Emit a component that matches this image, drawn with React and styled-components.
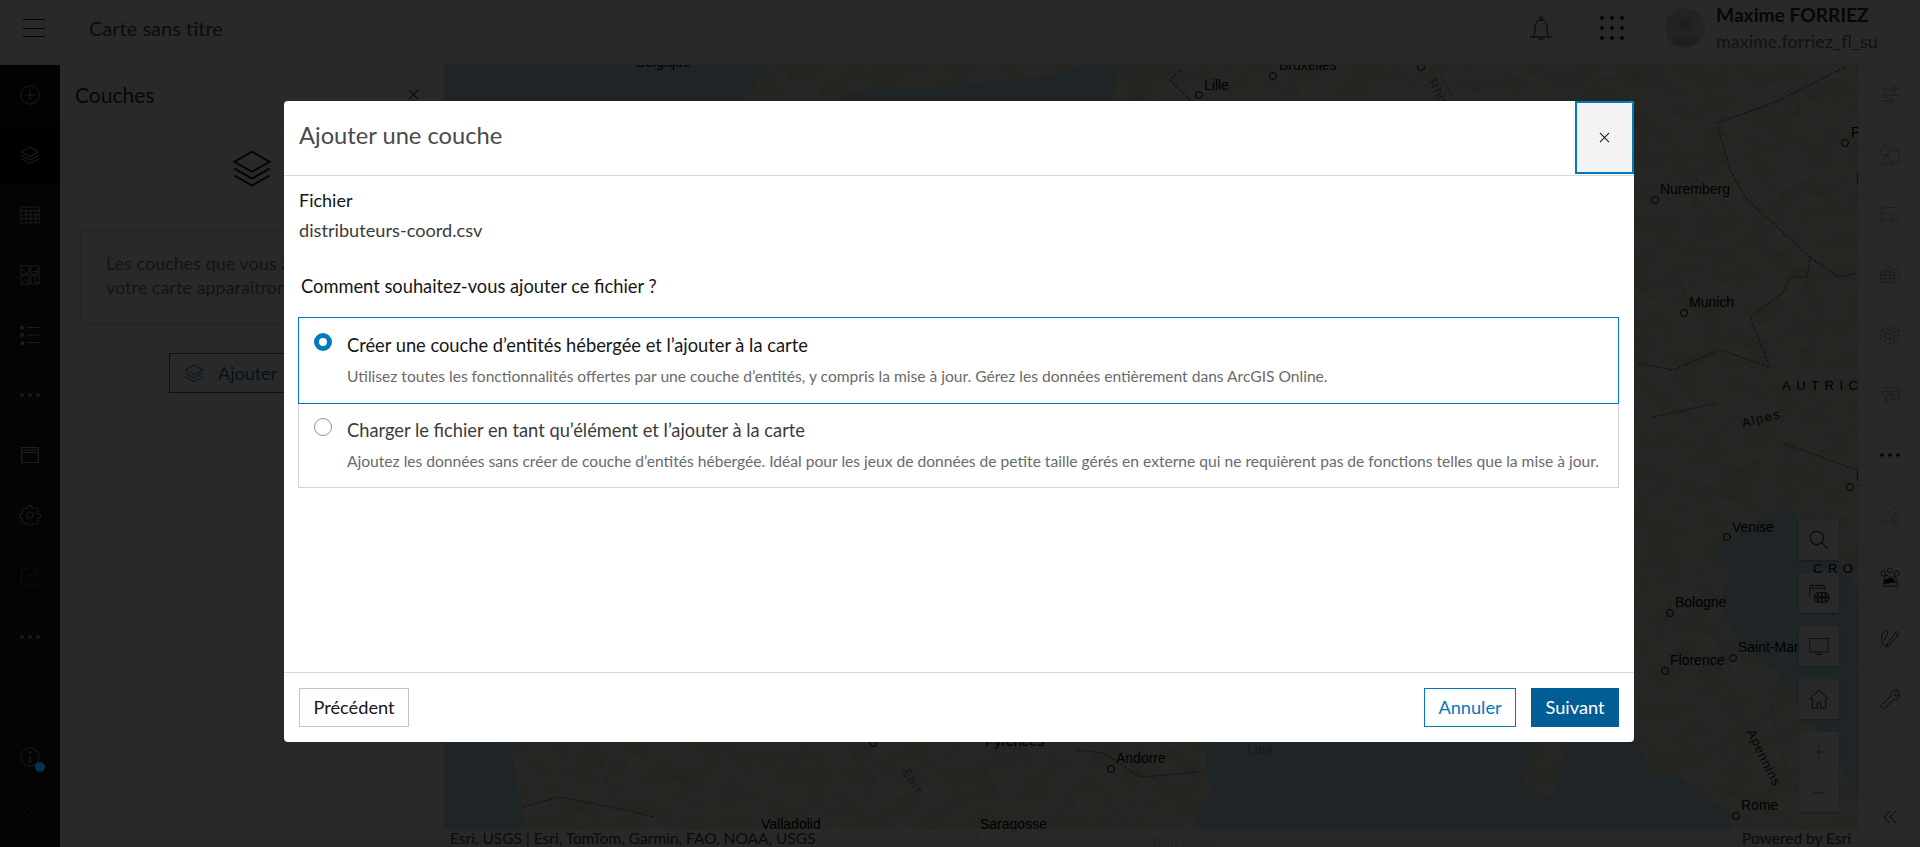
import React from "react";
import styled, { createGlobalStyle } from "styled-components";

const Global = createGlobalStyle`
  html, body { margin: 0; padding: 0; height: 100%; overflow: hidden; background: #fff; }
  * { box-sizing: border-box; }
  body { font-family: Lato, "Open Sans", "Liberation Sans", sans-serif; color: #151515; }
`;

const Page = styled.div`
  position: relative;
  width: 100%;
  height: 847px;
  display: flex;
  flex-direction: column;
  overflow: hidden;
  background: #fff;
`;

/* ---------- top bar ---------- */
const TopBar = styled.header`
  height: 65px;
  flex: none;
  display: flex;
  align-items: stretch;
  background: #fff;
  border-bottom: 1px solid #e4e4e4;
  color: #151515;
`;
const MenuButton = styled.div`
  width: 89px;
  padding: 0 0 8px 22px;
  display: flex;
  align-items: center;
  flex: none;
  color: #1a1a1a;
`;
const MapTitle = styled.div`
  flex: 1;
  padding-bottom: 8px;
  display: flex;
  align-items: center;
  font-size: 20px;
  color: #4a4a4a;
`;
const TopActions = styled.div`
  width: 415px;
  flex: none;
  padding-bottom: 8px;
  display: flex;
  align-items: center;
  border-left: 1px solid #e4e4e4;
  color: #151515;
`;
const BellSlot = styled.div`
  width: 94px;
  padding-left: 23px;
  flex: none;
  display: flex;
`;
const AppsSlot = styled.div`
  width: 65px;
  flex: none;
  display: flex;
`;
const AvatarSlot = styled.div`
  width: 51px;
  flex: none;
  display: flex;
`;
const UserBlock = styled.div`
  display: flex;
  flex-direction: column;
  gap: 4px;
  white-space: nowrap;
`;
const UserName = styled.div`
  font-size: 19.2px;
  line-height: 22px;
  font-weight: 700;
  color: #2b2b2b;
`;
const UserLogin = styled.div`
  font-size: 18px;
  line-height: 22px;
  color: #6e6e6e;
`;

/* ---------- main zone ---------- */
const Main = styled.main`
  flex: 1;
  min-height: 0;
  display: flex;
`;

const LeftNav = styled.nav`
  width: 60px;
  flex: none;
  display: flex;
  flex-direction: column;
  background: #1a1a1a;
  color: #c9c9c9;
`;
const NavItem = styled.div`
  height: 60px;
  flex: none;
  display: flex;
  align-items: center;
  justify-content: center;
  position: relative;
  background: ${(p) => (p.$active ? "#000" : p.$tint ? "#0d0d0d" : "transparent")};
  color: ${(p) => (p.$muted ? "#666" : "#c9c9c9")};
`;
const NavDivider = styled.div`
  height: 1px;
  flex: none;
  margin-top: 1px;
  background: #333;
`;
const NavSpacer = styled.div`
  flex: 1;
`;
const InfoDot = styled.span`
  position: absolute;
  z-index: 20;
  width: 10px;
  height: 10px;
  border-radius: 50%;
  left: 35px;
  top: 35px;
  background: #00344f;
`;

const Panel = styled.aside`
  width: 384px;
  flex: none;
  background: #fff;
  border-right: 1px solid #e8e8e8;
  display: flex;
  flex-direction: column;
  overflow: hidden;
`;
const PanelHead = styled.div`
  height: 63px;
  flex: none;
  display: flex;
  align-items: center;
  justify-content: space-between;
  padding: 0 24px 3px 15px;
  border-bottom: 1px solid #e8e8e8;
  font-size: 21px;
  color: #2b2b2b;
`;
const PanelBody = styled.div`
  flex: 1;
  display: flex;
  flex-direction: column;
  align-items: center;
  padding-top: 20px;
  color: #151515;
`;
const HintBox = styled.div`
  align-self: flex-start;
  width: 324px;
  height: 94px;
  margin: 42px 0 0 20px;
  padding: 20px 0 0 25px;
  border: 1px solid #d8d8d8;
  font-size: 18px;
  line-height: 24px;
  color: #7a7a7a;
  white-space: nowrap;
`;
const AddButton = styled.div`
  align-self: flex-start;
  margin: 29px 0 0 109px;
  width: 200px;
  height: 40px;
  display: flex;
  align-items: center;
  gap: 14px;
  padding-left: 14px;
  border: 1px solid #0079c1;
  color: #0079c1;
  font-size: 18px;
`;

/* ---------- map ---------- */
const MapCanvas = styled.section`
  flex: 1;
  position: relative;
  overflow: hidden;
  background: #bfdfee;
`;
const MapArt = styled.svg`
  position: absolute;
  inset: 0;
  width: 100%;
  height: 100%;
  display: block;
`;
const MapLabel = styled.span`
  position: absolute;
  left: ${(p) => p.$x - 444}px;
  top: ${(p) => p.$y - 65}px;
  transform: translateY(-50%) rotate(${(p) => p.$rot || 0}deg);
  transform-origin: left center;
  font-family: "Liberation Sans", Arial, sans-serif;
  font-size: ${(p) => p.$size || 14}px;
  line-height: 16px;
  letter-spacing: ${(p) => p.$track || 0}px;
  color: ${(p) => p.$color || "#000"};
  white-space: nowrap;
`;
const City = styled.i`
  position: absolute;
  left: ${(p) => p.$x - 444 - 4}px;
  top: ${(p) => p.$y - 65 - 4}px;
  width: 8px;
  height: 8px;
  border-radius: 50%;
  border: 1px solid #000;
`;
const Attribution = styled.div`
  position: absolute;
  left: 0;
  right: 0;
  bottom: 0;
  height: 18px;
  padding: 0 7px 0 6px;
  display: flex;
  align-items: center;
  justify-content: space-between;
  background: rgba(255, 255, 255, 0.82);
  font-size: 15.5px;
  color: #4a4a4a;
`;
const WidgetStack = styled.div`
  position: absolute;
  top: 455px;
  right: 19px;
  display: flex;
  flex-direction: column;
  gap: 13px;
  color: #323232;
`;
const Widget = styled.div`
  width: 40px;
  height: 40px;
  display: flex;
  align-items: center;
  justify-content: center;
  background: #fff;
  box-shadow: 0 1px 2px rgba(0, 0, 0, 0.3);
`;
const ZoomGroup = styled.div`
  display: flex;
  flex-direction: column;
  box-shadow: 0 1px 2px rgba(0, 0, 0, 0.3);
`;
const ZoomBtn = styled.div`
  width: 40px;
  height: 40px;
  display: flex;
  align-items: center;
  justify-content: center;
  background: #fff;
  color: #6e6e6e;
  & + & {
    border-top: 1px solid #e0e0e0;
  }
`;

/* ---------- right rail ---------- */
const RightRail = styled.aside`
  width: 62px;
  flex: none;
  display: flex;
  flex-direction: column;
  background: #fff;
  border-left: 1px solid #e8e8e8;
`;
const RailItem = styled.div`
  height: 60px;
  flex: none;
  display: flex;
  align-items: center;
  justify-content: center;
  color: ${(p) => (p.$dim ? "#a8a8a8" : "#151515")};
`;
const RailSection = styled.div`
  height: 61px;
  flex: none;
  display: flex;
  align-items: center;
  justify-content: center;
  border-top: 1px solid #e4e4e4;
  color: ${(p) => (p.$dim ? "#a8a8a8" : "#151515")};
`;
const RailSpacer = styled.div`
  flex: 1;
`;

/* ---------- overlay and dialog ---------- */
const Scrim = styled.div`
  position: absolute;
  inset: 0;
  z-index: 10;
  padding: 101px 0 0 284px;
  background: rgba(0, 0, 0, 0.84);
`;
const Dialog = styled.div`
  width: 1350px;
  height: 641px;
  display: flex;
  flex-direction: column;
  background: #fff;
  border-radius: 4px;
  overflow: hidden;
`;
const DialogHead = styled.div`
  height: 75px;
  flex: none;
  display: flex;
  align-items: stretch;
  border-bottom: 1px solid #d9d9d9;
`;
const DialogTitle = styled.h2`
  flex: 1;
  margin: 0;
  padding: 0 0 6px 15px;
  display: flex;
  align-items: center;
  font-size: 23.7px;
  font-weight: 400;
  color: #4a4a4a;
`;
const CloseButton = styled.button`
  width: 59px;
  height: 73px;
  margin: 0;
  padding: 0;
  display: flex;
  align-items: center;
  justify-content: center;
  border: 2px solid #0079c1;
  background: #f3f3f3;
  color: #151515;
`;
const DialogBody = styled.div`
  flex: 1;
  padding: 12px 15px 0 14px;
`;
const FieldLabel = styled.div`
  margin-left: 1px;
  font-size: 18px;
  line-height: 24px;
  color: #151515;
`;
const FileName = styled.div`
  margin: 6px 0 0 1px;
  font-size: 18.2px;
  line-height: 24px;
  color: #3b3b3b;
`;
const Question = styled.div`
  margin: 32px 0 19px 3px;
  font-size: 18.3px;
  line-height: 24px;
  color: #151515;
`;
const Choice = styled.div`
  display: flex;
  gap: 15px;
  padding: ${(p) => (p.$selected ? "15px 14px 15px 15px" : "14px 14px 14px 15px")};
  border: 1px solid ${(p) => (p.$selected ? "#0079c1" : "#d4d4d4")};
  border-top: ${(p) => (p.$selected ? "1px solid #0079c1" : "none")};
`;
const Radio = styled.span`
  width: 18px;
  height: 18px;
  flex: none;
  border-radius: 50%;
  background: #fff;
  border: ${(p) => (p.$checked ? "5.5px solid #0079c1" : "1px solid #959595")};
`;
const ChoiceText = styled.div`
  flex: 1;
  min-width: 0;
`;
const ChoiceTitle = styled.div`
  font-size: 18.3px;
  line-height: 24px;
  color: ${(p) => (p.$selected ? "#151515" : "#3b3b3b")};
`;
const ChoiceDesc = styled.div`
  margin-top: 8px;
  font-size: 15.6px;
  line-height: 23px;
  color: #6a6a6a;
`;
const DialogFoot = styled.div`
  height: 70px;
  flex: none;
  display: flex;
  align-items: flex-start;
  gap: 15px;
  padding: 15px 15px 0 15px;
  border-top: 1px solid #d9d9d9;
`;
const FootSpacer = styled.div`
  flex: 1;
`;
const FootButton = styled.button`
  height: 39px;
  width: ${(p) => p.$w}px;
  margin: 0;
  padding: 0 0 2px;
  font-family: inherit;
  font-size: 18.2px;
  color: ${(p) => (p.$kind === "primary" ? "#fff" : p.$kind === "outline" ? "#0079c1" : "#151515")};
  background: ${(p) => (p.$kind === "primary" ? "#005e95" : "#fff")};
  border: 1px solid
    ${(p) => (p.$kind === "primary" ? "#005e95" : p.$kind === "outline" ? "#0079c1" : "#c4c4c4")};
`;

/* ---------- icons ---------- */
const Svg = ({ size = 24, vb = 24, sw = 1, children }) => (
  <svg width={size} height={size} viewBox={`0 0 ${vb} ${vb}`} fill="none" stroke="currentColor" strokeWidth={sw}>
    {children}
  </svg>
);
const IMenu = () => (
  <svg width="24" height="20" viewBox="0 0 24 20" fill="none" stroke="currentColor" strokeWidth="1">
    <path d="M1 1.500h22M1 10.500h22M1 18.500h22" />
  </svg>
);
const ILayers = ({ size = 20 }) => (
  <Svg size={size} vb={32} sw={1.6}>
    <path d="M16 3 30 11 16 19 2 11Z" />
    <path d="M2 16.500 16 24.500 30 16.500" />
    <path d="M2 22 16 30 30 22" />
  </Svg>
);
const IPlus = () => (
  <Svg size={20}>
    <circle cx="12" cy="12" r="11" />
    <path d="M12 6v12M6 12h12" />
  </Svg>
);
const ITable = () => (
  <Svg size={20}>
    <path d="M1 2.500h22v19H1zM1 7h22M1 11.700h22M1 16.500h22M7.500 7v14.500M13 7v14.500M18.500 7v14.500" />
  </Svg>
);
const IDash = () => (
  <Svg size={20}>
    <path d="M1 1h10v10H1zM13 1h10v10H13zM1 13h10v10H1zM13 13h10v10H13z" />
    <path d="M3 4c2 4 4 6 6 5M15 8h6V3M2 22l4-5 4 5M18 15v6h4" />
  </Svg>
);
const IList = () => (
  <Svg size={20}>
    <path d="M8 3h15M8 12h15M8 21h15" />
    <rect x="1" y="1.500" width="3" height="3" fill="currentColor" />
    <rect x="1" y="10.500" width="3" height="3" fill="currentColor" />
    <path d="M1 23l2-4 2 4z" fill="currentColor" />
  </Svg>
);
const IDots = () => (
  <svg width="20" height="6" viewBox="0 0 20 6" fill="currentColor">
    <circle cx="2" cy="3" r="1.800" />
    <circle cx="10" cy="3" r="1.800" />
    <circle cx="18" cy="3" r="1.800" />
  </svg>
);
const IFolder = () => (
  <Svg size={20}>
    <path d="M2 6h20v15H2zM2 3h20v3M2 3v3M22 3v3" strokeWidth="1.300" />
    <path d="M2 9h20" />
  </Svg>
);
const IGear = () => (
  <Svg size={22}>
    <circle cx="12" cy="12" r="3.500" />
    <path d="M10.300 1.500h3.400l.6 2.900 2.200.9 2.500-1.600 2.400 2.400-1.600 2.500.9 2.200 2.900.6v3.400l-2.900.6-.9 2.200 1.600 2.500-2.400 2.400-2.500-1.600-2.200.9-.6 2.900h-3.400l-.6-2.900-2.200-.9-2.500 1.600-2.400-2.400 1.600-2.500-.9-2.200-2.900-.6v-3.400l2.900-.6.9-2.200-1.600-2.500 2.400-2.400 2.500 1.600 2.200-.9z" />
  </Svg>
);
const IShare = () => (
  <Svg size={20}>
    <path d="M12 3H1.500v19.500H21V13" />
    <path d="M7 16c1-5 5-8 12-8M16 3l6 5-6 5" />
  </Svg>
);
const IInfo = () => (
  <Svg size={20}>
    <circle cx="12" cy="12" r="11" />
    <path d="M12 10v8M10 18h4" />
    <circle cx="12" cy="6.500" r="1" fill="currentColor" />
  </Svg>
);
const IChevronsR = () => (
  <Svg size={16}>
    <path d="M3 3l9 9-9 9M12 3l9 9-9 9" strokeWidth="1.400" />
  </Svg>
);
const IChevronsL = () => (
  <Svg size={16}>
    <path d="M12 3l-9 9 9 9M21 3l-9 9 9 9" strokeWidth="1.400" />
  </Svg>
);
const IX = ({ size = 12 }) => (
  <svg width={size} height={size} viewBox="0 0 12 12" fill="none" stroke="currentColor" strokeWidth="1.100">
    <path d="M1 1l10 10M11 1L1 11" />
  </svg>
);
const IBell = () => (
  <Svg size={24}>
    <path d="M1 21h22M3.500 21c2-2 2.500-4 2.500-8s1-9 6-9 6 5 6 9 .5 6 2.500 8" />
    <circle cx="12" cy="2.500" r="1.500" />
    <path d="M9.500 22c.5 2 4.500 2 5 0" />
  </Svg>
);
const IApps = () => (
  <svg width="24" height="24" viewBox="0 0 24 24" fill="currentColor">
    {[2, 12, 22].map((y) => [2, 12, 22].map((x) => <circle key={`${x}-${y}`} cx={x} cy={y} r="1.900" />))}
  </svg>
);
const IAvatar = () => (
  <svg width="40" height="40" viewBox="0 0 40 40">
    <circle cx="20" cy="20" r="20" fill="#d6d6d6" />
    <circle cx="20" cy="16" r="7" fill="#c2c2c2" />
    <path d="M7 34c3-9 23-9 26 0a20 20 0 0 1-26 0z" fill="#c2c2c2" />
  </svg>
);
const ISliders = () => (
  <Svg size={20}>
    <path d="M1 5h22M1 12h22M1 19h22" />
    <rect x="15" y="2" width="3" height="6" fill="#fff" />
    <rect x="5" y="9" width="3" height="6" fill="#fff" />
    <rect x="12" y="16" width="3" height="6" fill="#fff" />
  </Svg>
);
const IShapes = () => (
  <Svg size={20}>
    <circle cx="7" cy="7" r="6" />
    <path d="M9 7h14v14h-8" />
    <path d="M8 10 1 23h14z" />
  </Svg>
);
const IFormula = () => (
  <Svg size={20}>
    <path d="M1 1.500h3.500V5H1zM1 9.500h3.500V13H1zM1 17h3.500v3.500H1zM8 3h14M8 11h14M8 18h4" />
    <path d="M17 13c-2 0-2 1-2 3v6c0 1.500-1 2-2 2M12 17h5M18 16l5 7M23 16l-5 7" />
  </Svg>
);
const ITableAdd = () => (
  <Svg size={20}>
    <path d="M1 8h16v13H1zM1 12h16M1 16.500h16M6 8v13M11.500 8v13" strokeWidth="1.300" />
    <path d="M7 8V5h16v10h-6M9 2h5M9 24h4" />
  </Svg>
);
const ICube = () => (
  <Svg size={20}>
    <path d="M12 1 23 6v12l-11 5-11-5V6zM1 6l11 5 11-5M12 11v12M6.500 3.500l11 5v12M17.500 3.500l-11 5v12M1 12l11 5 11-5" />
  </Svg>
);
const IFilterTable = () => (
  <Svg size={20}>
    <path d="M8 3h15v14H13M8 3v3M8 8h15M8 12h15M15 8v9" />
    <path d="M1 8h11l-4 5v8l-2 2v-10z" />
  </Svg>
);
const IPencilGear = () => (
  <Svg size={20}>
    <path d="M2 22l2-6L17 2l4 4-6 7M2 22l6-2 3-3" />
    <circle cx="17" cy="18" r="4" />
    <circle cx="17" cy="18" r="1.500" />
  </Svg>
);
const IGroup = () => (
  <Svg size={20}>
    <circle cx="12" cy="4" r="3" />
    <circle cx="4" cy="8" r="3" />
    <circle cx="20" cy="8" r="3" />
    <path d="M6 10 4 23h18l-4-12-4 3-3-3z" />
    <path d="M5 16l9-3 5 5-14 2" fill="currentColor" />
  </Svg>
);
const ISketch = () => (
  <Svg size={20}>
    <path d="M11 21l-3 2 .8-4L20 4l3 3zM18 6l3 3" />
    <path d="M8 3C3 4 1 10 2 15c.5 4 3 7 6 7M8 3c2 0 2 3 0 6l-3 6" />
  </Svg>
);
const IWrench = () => (
  <Svg size={20}>
    <path d="M15 3c2-2 5-2.500 7-1.500l-4 4v3h3l2.500-3.500c1 3 0 6-3 7.500-2 1-3.500.5-4.500 0L6 23c-1.500 1.500-3 1-4 0s-1.500-2.500 0-4l10.500-10c-.5-2 .5-4.500 2.500-6z" />
  </Svg>
);
const ISearch = () => (
  <Svg size={20}>
    <circle cx="9.500" cy="9.500" r="8" strokeWidth="1.300" />
    <path d="M15 15l8 8" strokeWidth="1.500" />
  </Svg>
);
const ITime = () => (
  <svg width="21" height="21" viewBox="0 0 24 24" fill="none" stroke="currentColor" strokeWidth="1">
    <path d="M1 17V3h17v5M1 6h17M4 1v3M9.500 1v3M15 1v3" />
    <rect x="6" y="11" width="17" height="11" rx="5.500" strokeWidth="1.200" />
    <path d="M10 11v11M14.500 11v11M19 11v11M6 16.500h17" strokeWidth="2" />
  </svg>
);
const IMonitor = () => (
  <Svg size={20}>
    <path d="M1 3h22v16H1zM8 22h8M10 19v3M14 19v3" />
  </Svg>
);
const IHome = () => (
  <Svg size={20}>
    <path d="M12 1 1 12h3v11h6v-7h4v7h6V12h3z" strokeWidth="1.200" />
  </Svg>
);
const IPlusBare = () => (
  <Svg size={14}>
    <path d="M12 1v22M1 12h22" strokeWidth="1.500" />
  </Svg>
);
const IMinusBare = () => (
  <Svg size={14}>
    <path d="M1 12h22" strokeWidth="1.500" />
  </Svg>
);

/* ---------- map art ---------- */
const LAND = [
  "M765 65 746 102H835L850 92 886 87 931 88 970 83 1046 77 1084 65Z",
  "M1105 65 1116 72 1113 102V742H1637L1653 777 1673 773 1693 787 1720 807 1733 827 1750 847H1858V65Z",
  "M510 742H1207L1205 773 1212 787 1192 829 1150 847H528Z",
  "M1538 742H1560L1565 765 1552 795 1543 800 1528 790 1520 770Z",
];
const MapDrawing = () => (
  <MapArt viewBox="444 65 1414 782" preserveAspectRatio="none">
    <defs>
      <filter id="terrain" x="0" y="0" width="100%" height="100%">
        <feTurbulence type="fractalNoise" baseFrequency="0.04 0.06" numOctaves="5" seed="7" />
        <feColorMatrix type="matrix" values="0 0 0 0 0.55  0 0 0 0 0.58  0 0 0 0 0.42  1.100 0 0 0 -0.35" />
      </filter>
      <clipPath id="landClip">
        {LAND.map((d) => (
          <path key={d} d={d} />
        ))}
      </clipPath>
    </defs>
    <g fill="#efeee2">
      {LAND.map((d) => (
        <path key={d} d={d} />
      ))}
    </g>
    <rect x="444" y="65" width="1414" height="782" filter="url(#terrain)" clipPath="url(#landClip)" />
    <path fill="#bfdfee" d="M1773 512 1793 510 1810 540 1840 560 1858 590V797L1840 763 1807 717 1773 667 1737 643 1727 617 1723 593 1733 577 1717 550 1727 543Z" />
    <g fill="none" stroke="#c4c4b8" strokeWidth=".8">
      <path d="M1640 70 1680 95 1720 75 1790 80 1800 110 1760 140M1640 150 1690 180 1700 230 1690 250 1730 240 1800 260M1640 290 1680 280 1690 320 1640 350M1790 80 1830 110M1850 120 1800 190 1770 230" />
      <path d="M1640 480 1680 510 1720 480 1760 460M1640 560 1680 570 1660 640M1660 640 1700 600 1740 690M1700 720 1740 780M1770 700 1790 790" />
      <path d="M600 760 610 790 660 770 700 790 760 800M850 745 880 790 930 810 975 820M980 760 1000 800 975 830M1130 65 1180 85 1210 65M1260 65 1290 100M1320 70 1380 95M1440 65 1470 90 1540 72 1600 80 1660 70" />
    </g>
    <g fill="none" stroke="#7d6c98" strokeWidth="1.200" strokeDasharray="3 1.500">
      <path d="M1845 67 1773 103 1717 123 1730 170 1747 200 1773 223 1810 257 1807 277 1790 277 1783 293 1750 317 1763 350 1770 367 1720 350 1673 370 1637 363" />
      <path d="M1810 257 1838 277 1857 273M1653 417 1717 403M1783 443 1857 470" />
      <path d="M523 807 558 797 625 810 654 817M1078 750 1103 753 1141 777 1199 772M1180 70 1170 80 1190 100" />
    </g>
    <path d="M915 770 935 790M1440 75 1455 100" stroke="#a5c5d8" strokeWidth="1" fill="none" />
  </MapArt>
);

const LABELS = [
  { t: "Belgique", x: 636, y: 62 },
  { t: "Bruxelles", x: 1279, y: 65 },
  { t: "Lille", x: 1204, y: 85 },
  { t: "Nuremberg", x: 1660, y: 189 },
  { t: "Munich", x: 1689, y: 302 },
  { t: "P", x: 1851, y: 132 },
  { t: "I", x: 1856, y: 178 },
  { t: "I", x: 1856, y: 476 },
  { t: "Venise", x: 1732, y: 527 },
  { t: "Bologne", x: 1675, y: 602 },
  { t: "Saint-Marin", x: 1738, y: 647 },
  { t: "Florence", x: 1670, y: 660 },
  { t: "Rome", x: 1741, y: 805 },
  { t: "Andorre", x: 1116, y: 758 },
  { t: "Pyrénées", x: 985, y: 741 },
  { t: "Valladolid", x: 761, y: 824 },
  { t: "Saragosse", x: 980, y: 824 },
  { t: "Barcelone", x: 1153, y: 843 },
  { t: "AUTRICHE", x: 1782, y: 386, track: 5.5, size: 13 },
  { t: "CROATIE", x: 1813, y: 569, track: 5.5, size: 13 },
  { t: "Alpes", x: 1742, y: 424, rot: -15, track: 1.5, size: 13, color: "#222" },
  { t: "Apennins", x: 1750, y: 730, rot: 64, track: 1, size: 13, color: "#222" },
  { t: "Èbre", x: 905, y: 770, rot: 55, size: 12, track: 1, color: "#5a8fb0" },
  { t: "Rhin", x: 1431, y: 80, rot: 60, size: 13, track: 1, color: "#5a8fb0" },
  { t: "Lion", x: 1247, y: 750, size: 12, track: 1, color: "#7d98a8" },
];
const CITIES = [
  [1199, 95], [1273, 76], [1421, 67], [1655, 200], [1684, 313], [1845, 143], [1850, 487],
  [1727, 537], [1670, 613], [1733, 658], [1665, 671], [1736, 816], [1111, 769], [975, 834], [873, 743],
];

export default function App() {
  return (
    <Page>
      <Global />
      <TopBar>
        <MenuButton>
          <IMenu />
        </MenuButton>
        <MapTitle>Carte sans titre</MapTitle>
        <TopActions>
          <BellSlot>
            <IBell />
          </BellSlot>
          <AppsSlot>
            <IApps />
          </AppsSlot>
          <AvatarSlot>
            <IAvatar />
          </AvatarSlot>
          <UserBlock>
            <UserName>Maxime FORRIEZ</UserName>
            <UserLogin>maxime.forriez_fl_su</UserLogin>
          </UserBlock>
        </TopActions>
      </TopBar>
      <Main>
        <LeftNav>
          <NavItem $tint><IPlus /></NavItem>
          <NavItem $active><ILayers /></NavItem>
          <NavItem><ITable /></NavItem>
          <NavItem><IDash /></NavItem>
          <NavItem><IList /></NavItem>
          <NavItem><IDots /></NavItem>
          <NavItem><IFolder /></NavItem>
          <NavItem><IGear /></NavItem>
          <NavDivider />
          <NavItem $muted><IShare /></NavItem>
          <NavItem><IDots /></NavItem>
          <NavSpacer />
          <NavItem>
            <IInfo />
            <InfoDot />
          </NavItem>
          <NavItem $muted><IChevronsR /></NavItem>
        </LeftNav>
        <Panel>
          <PanelHead>
            Couches
            <IX size={11} />
          </PanelHead>
          <PanelBody>
            <ILayers size={40} />
            <HintBox>
              Les couches que vous ajoutez à
              <br />
              votre carte apparaîtront ici.
            </HintBox>
            <AddButton>
              <ILayers size={20} />
              Ajouter
            </AddButton>
          </PanelBody>
        </Panel>
        <MapCanvas>
          <MapDrawing />
          {CITIES.map(([x, y]) => (
            <City key={`${x}-${y}`} $x={x} $y={y} />
          ))}
          {LABELS.map((l) => (
            <MapLabel key={`${l.t}-${l.y}`} $x={l.x} $y={l.y} $rot={l.rot} $track={l.track} $size={l.size} $color={l.color}>
              {l.t}
            </MapLabel>
          ))}
          <WidgetStack>
            <Widget><ISearch /></Widget>
            <Widget><ITime /></Widget>
            <Widget><IMonitor /></Widget>
            <Widget><IHome /></Widget>
            <ZoomGroup>
              <ZoomBtn><IPlusBare /></ZoomBtn>
              <ZoomBtn><IMinusBare /></ZoomBtn>
            </ZoomGroup>
          </WidgetStack>
          <Attribution>
            <span>Esri, USGS | Esri, TomTom, Garmin, FAO, NOAA, USGS</span>
            <span>Powered by Esri</span>
          </Attribution>
        </MapCanvas>
        <RightRail>
          <RailItem $dim><ISliders /></RailItem>
          <RailItem $dim><IShapes /></RailItem>
          <RailItem $dim><IFormula /></RailItem>
          <RailItem $dim><ITableAdd /></RailItem>
          <RailItem $dim><ICube /></RailItem>
          <RailItem $dim><IFilterTable /></RailItem>
          <RailItem><IDots /></RailItem>
          <RailSection $dim><IPencilGear /></RailSection>
          <RailSection><IGroup /></RailSection>
          <RailSection><ISketch /></RailSection>
          <RailSection><IWrench /></RailSection>
          <RailSpacer />
          <RailItem><IChevronsL /></RailItem>
        </RightRail>
      </Main>
      <Scrim>
        <Dialog>
          <DialogHead>
            <DialogTitle>Ajouter une couche</DialogTitle>
            <CloseButton aria-label="Fermer">
              <IX size={11} />
            </CloseButton>
          </DialogHead>
          <DialogBody>
            <FieldLabel>Fichier</FieldLabel>
            <FileName>distributeurs-coord.csv</FileName>
            <Question>Comment souhaitez-vous ajouter ce fichier ?</Question>
            <Choice $selected>
              <Radio $checked />
              <ChoiceText>
                <ChoiceTitle $selected>Créer une couche d’entités hébergée et l’ajouter à la carte</ChoiceTitle>
                <ChoiceDesc>
                  Utilisez toutes les fonctionnalités offertes par une couche d’entités, y compris la mise à jour. Gérez les données entièrement dans ArcGIS Online.
                </ChoiceDesc>
              </ChoiceText>
            </Choice>
            <Choice>
              <Radio />
              <ChoiceText>
                <ChoiceTitle>Charger le fichier en tant qu’élément et l’ajouter à la carte</ChoiceTitle>
                <ChoiceDesc>
                  Ajoutez les données sans créer de couche d’entités hébergée. Idéal pour les jeux de données de petite taille gérés en externe qui ne requièrent pas de fonctions telles que la mise à jour.
                </ChoiceDesc>
              </ChoiceText>
            </Choice>
          </DialogBody>
          <DialogFoot>
            <FootButton $w={110}>Précédent</FootButton>
            <FootSpacer />
            <FootButton $w={92} $kind="outline">Annuler</FootButton>
            <FootButton $w={88} $kind="primary">Suivant</FootButton>
          </DialogFoot>
        </Dialog>
      </Scrim>
    </Page>
  );
}
